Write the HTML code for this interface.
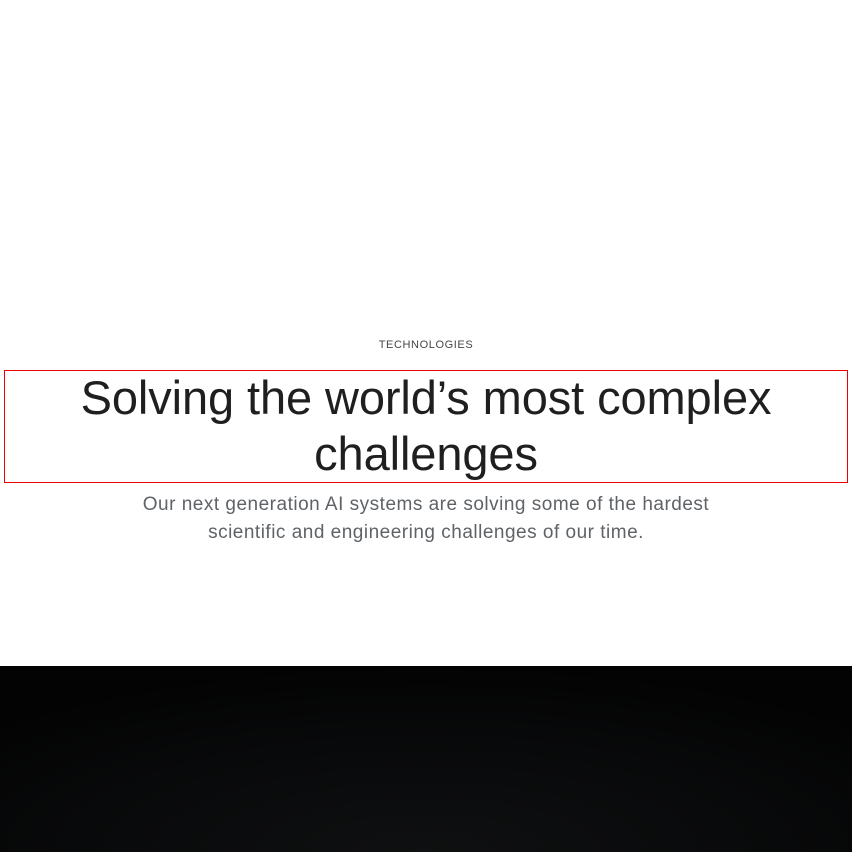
<!DOCTYPE html>
<html><head><style>
html,body{margin:0;padding:0;width:852px;height:852px;overflow:hidden;background:#fff;font-family:"Liberation Sans",sans-serif}
.eyebrow{position:absolute;top:339px;left:0;width:852px;text-align:center;font-size:11px;letter-spacing:0.6px;color:#444746}
.box{position:absolute;left:4px;top:370px;width:842px;height:111px;border:1px solid #e00;box-sizing:content-box}
h1{position:absolute;top:370px;left:0;width:852px;margin:0;text-align:center;font-weight:400;font-size:47px;line-height:56px;color:#1f1f1f;letter-spacing:-0.1px}
p{position:absolute;top:491px;left:0;width:852px;margin:0;text-align:center;font-size:19px;line-height:28px;color:#5f6368;letter-spacing:0.5px}
.dark{position:absolute;top:666px;left:0;width:852px;height:186px;background:radial-gradient(ellipse 70% 100% at 50% 100%,#0f1011 0%,#08090a 60%,#030303 100%)}
</style></head><body>
<div class="eyebrow">TECHNOLOGIES</div>
<div class="box"></div>
<h1>Solving the world’s most complex<br>challenges</h1>
<p>Our next generation AI systems are solving some of the hardest<br>scientific and engineering challenges of our time.</p>
<div class="dark"></div>
</body></html>
